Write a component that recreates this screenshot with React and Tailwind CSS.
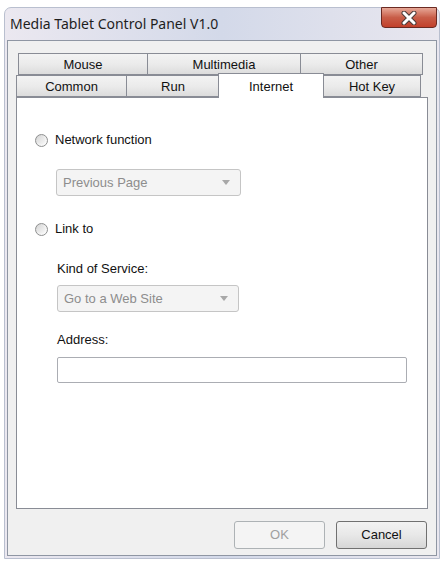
import React from 'react';

const ui = { fontFamily: '"Liberation Sans", Arial, sans-serif' };
const title = { fontFamily: '"Noto Sans", "Open Sans", sans-serif' };

function Tab({ label, w, selected }) {
  if (selected) {
    return (
      <div
        className={`relative z-10 -mt-[2px] -mx-[1px] h-[25px] ${w} border border-b-0 border-[#898c95] bg-white flex items-start justify-center pt-[3px] text-[13px] text-[#111]`}
      >
        {label}
      </div>
    );
  }
  return (
    <div
      className={`h-[22px] ${w} border border-[#898c95] border-r-0 last:border-r bg-gradient-to-b from-[#f3f3f3] via-[#ebebeb] to-[#dcdcdc] flex items-center justify-center pt-px text-[13px] text-[#111]`}
    >
      {label}
    </div>
  );
}

function Radio({ label }) {
  return (
    <div className="flex items-center gap-[7px] h-[16px]">
      <div className="w-[13px] h-[13px] rounded-full border border-[#8e8f8f] bg-gradient-to-br from-[#cfcfcf] via-[#eeeeee] to-[#ffffff] flex items-center justify-center">
        <div className="w-[7px] h-[7px] rounded-full bg-gradient-to-br from-[#dcdcdc] to-[#f6f6f6]" />
      </div>
      <span className="text-[13px] text-[#111]">{label}</span>
    </div>
  );
}

function Combo({ value, w }) {
  return (
    <div
      className={`${w} h-[27px] rounded-[3px] border border-[#c5c5c5] bg-[#f4f4f4] flex items-center justify-between pl-[6px] pr-[10px] text-[13px] text-[#8d8d8d]`}
    >
      <span>{value}</span>
      <svg width="8" height="5" viewBox="0 0 8 5">
        <path d="M0 0 H8 L4 5 Z" fill="#a8a8a8" />
      </svg>
    </div>
  );
}

export default function App() {
  return (
    <div className="w-[440px] h-[562px] bg-white overflow-hidden pt-[7px]" style={ui}>
      <div className="ml-[4px] w-[436px] h-[552px] rounded-t-[7px] border border-[#b9bfcf] bg-gradient-to-r from-[#ebe8f0] via-[#d3d9e9] to-[#e9e7ef] flex flex-col">
        {/* title bar */}
        <div className="h-[32px] flex items-start justify-between">
          <div className="pl-[5px] pt-[6px] text-[14px] leading-[20px] text-[#1e1e1e]" style={title}>
            Media Tablet Control Panel V1.0
          </div>
          <div className="mr-[2px] -mt-px w-[56px] h-[21px] rounded-b-[4px] border border-[#6b2a22] bg-gradient-to-b from-[#e6a797] via-[#c85d48] to-[#c2402b] flex items-center justify-center">
            <svg width="16" height="14" viewBox="0 0 16 14">
              <path d="M3 2 L13 12 M13 2 L3 12" stroke="#4a3a38" strokeWidth="5" strokeLinecap="round" />
              <path d="M3 2 L13 12 M13 2 L3 12" stroke="#ffffff" strokeWidth="3" strokeLinecap="round" />
            </svg>
          </div>
        </div>

        {/* client area */}
        <div className="mx-[2px] mb-[2px] flex-1 border border-[#8f96a3] bg-[#f0f0f0] flex flex-col px-[8px] pt-[12px]">
          {/* tabs */}
          <div className="flex pl-[2px]">
            <Tab label="Mouse" w="w-[129px]" />
            <Tab label="Multimedia" w="w-[153px]" />
            <Tab label="Other" w="w-[123px]" />
          </div>
          <div className="flex -mb-px">
            <Tab label="Common" w="w-[110px]" />
            <Tab label="Run" w="w-[93px]" />
            <Tab label="Internet" w="w-[106px]" selected />
            <Tab label="Hot Key" w="w-[98px]" />
          </div>

          {/* panel */}
          <div className="h-[412px] border border-[#898c95] bg-white flex flex-col pl-[18px] pt-[34px]">
            <Radio label="Network function" />
            <div className="pl-[21px] mt-[21px]">
              <Combo value="Previous Page" w="w-[185px]" />
            </div>
            <div className="mt-[25px]">
              <Radio label="Link to" />
            </div>
            <div className="pl-[22px] flex flex-col">
              <span className="mt-[22px] h-[16px] text-[13px] text-[#111]">Kind of Service:</span>
              <div className="mt-[10px]">
                <Combo value="Go to a Web Site" w="w-[182px]" />
              </div>
              <span className="mt-[18px] h-[16px] text-[13px] text-[#111]">Address:</span>
              <div className="mt-[11px] w-[350px] h-[26px] rounded-[2px] border border-[#abadb3] bg-white" />
            </div>
          </div>

          {/* buttons */}
          <div className="flex justify-end gap-[11px] mt-[12px] pr-[1px]">
            <div className="w-[91px] h-[28px] rounded-[3px] border border-[#adb2b5] bg-[#f4f4f4] flex items-center justify-center text-[13px] text-[#a0a0a0]">
              OK
            </div>
            <div className="w-[91px] h-[28px] rounded-[3px] border border-[#707070] bg-gradient-to-b from-[#f2f2f2] via-[#e8e8e8] to-[#d6d6d6] flex items-center justify-center text-[13px] text-[#111]">
              Cancel
            </div>
          </div>
        </div>
      </div>
    </div>
  );
}
